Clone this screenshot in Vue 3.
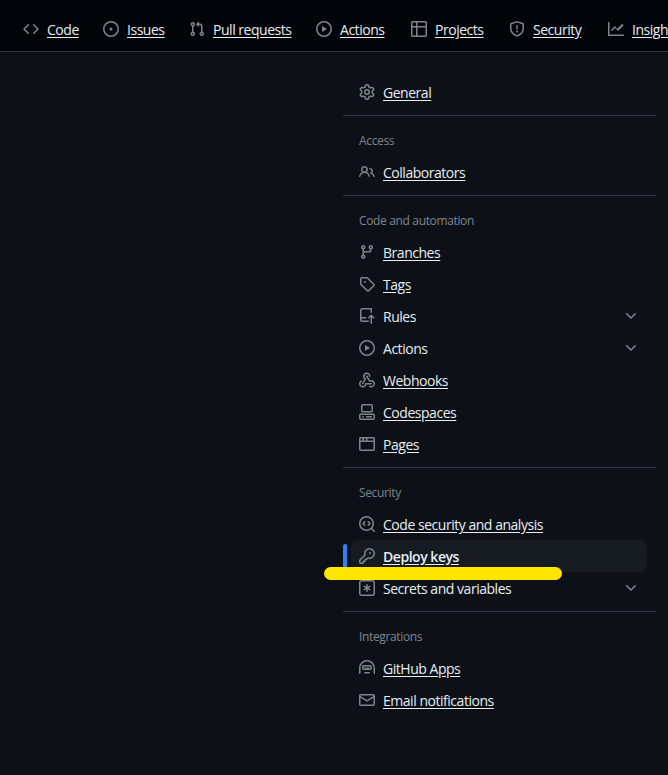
<script setup>
const icons = {
  code: ['m11.28 3.22 4.25 4.25a.75.75 0 0 1 0 1.06l-4.25 4.25a.749.749 0 0 1-1.275-.326.749.749 0 0 1 .215-.734L13.94 8l-3.72-3.72a.749.749 0 0 1 .326-1.275.749.749 0 0 1 .734.215Zm-6.56 0a.751.751 0 0 1 1.042.018.751.751 0 0 1 .018 1.042L2.06 8l3.72 3.72a.749.749 0 0 1-.326 1.275.749.749 0 0 1-.734-.215L.47 8.53a.75.75 0 0 1 0-1.06Z'],
  issue: ['M8 9.5a1.5 1.5 0 1 0 0-3 1.5 1.5 0 0 0 0 3Z', 'M8 0a8 8 0 1 1 0 16A8 8 0 0 1 8 0ZM1.5 8a6.5 6.5 0 1 0 13 0 6.5 6.5 0 0 0-13 0Z'],
  pull: ['M1.5 3.25a2.25 2.25 0 1 1 3 2.122v5.256a2.251 2.251 0 1 1-1.5 0V5.372A2.25 2.25 0 0 1 1.5 3.25Zm5.677-.177L9.573.677A.25.25 0 0 1 10 .854V2.5h1A2.5 2.5 0 0 1 13.5 5v5.628a2.251 2.251 0 1 1-1.5 0V5a1 1 0 0 0-1-1h-1v1.646a.25.25 0 0 1-.427.177L7.177 3.427a.25.25 0 0 1 0-.354ZM3.75 2.5a.75.75 0 1 0 0 1.5.75.75 0 0 0 0-1.5Zm0 9.5a.75.75 0 1 0 0 1.5.75.75 0 0 0 0-1.5Zm8.25.75a.75.75 0 1 0 1.5 0 .75.75 0 0 0-1.5 0Z'],
  play: ['M8 0a8 8 0 1 1 0 16A8 8 0 0 1 8 0ZM1.5 8a6.5 6.5 0 1 0 13 0 6.5 6.5 0 0 0-13 0Zm4.879-2.773 4.264 2.559a.25.25 0 0 1 0 .428l-4.264 2.559A.25.25 0 0 1 6 10.559V5.442a.25.25 0 0 1 .379-.215Z'],
  table: ['M0 1.75C0 .784.784 0 1.75 0h12.5C15.216 0 16 .784 16 1.75v12.5A1.75 1.75 0 0 1 14.25 16H1.75A1.75 1.75 0 0 1 0 14.25ZM6.5 6.5v8h7.75a.25.25 0 0 0 .25-.25V6.5Zm8-1.5V1.75a.25.25 0 0 0-.25-.25H6.5V5Zm-13 1.5v7.75c0 .138.112.25.25.25H5v-8ZM5 5V1.5H1.75a.25.25 0 0 0-.25.25V5Z'],
  shield: ['M7.467.133a1.748 1.748 0 0 1 1.066 0l5.25 1.68A1.75 1.75 0 0 1 15 3.48V7c0 1.566-.32 3.182-1.303 4.682-.983 1.498-2.585 2.813-5.032 3.855a1.697 1.697 0 0 1-1.33 0c-2.447-1.042-4.049-2.357-5.032-3.855C1.32 10.182 1 8.566 1 7V3.48a1.75 1.75 0 0 1 1.217-1.667Zm.61 1.429a.25.25 0 0 0-.153 0l-5.25 1.68a.25.25 0 0 0-.174.238V7c0 1.358.275 2.666 1.057 3.86.784 1.194 2.121 2.34 4.366 3.297a.196.196 0 0 0 .154 0c2.245-.956 3.582-2.104 4.366-3.298C13.225 9.666 13.5 8.36 13.5 7V3.48a.251.251 0 0 0-.174-.237l-5.25-1.68ZM8.75 4.75v3a.75.75 0 0 1-1.5 0v-3a.75.75 0 0 1 1.5 0ZM9 10.5a1 1 0 1 1-2 0 1 1 0 0 1 2 0Z'],
  graph: ['M1.5 1.75V13.5h13.75a.75.75 0 0 1 0 1.5H.75a.75.75 0 0 1-.75-.75V1.75a.75.75 0 0 1 1.5 0Zm14.28 2.53-5.25 5.25a.75.75 0 0 1-1.06 0L7 7.06 4.28 9.78a.751.751 0 0 1-1.042-.018.751.751 0 0 1-.018-1.042l3.25-3.25a.75.75 0 0 1 1.06 0L9 7.94l4.72-4.72a.751.751 0 0 1 1.042.018.751.751 0 0 1 .018 1.042Z'],
  gear: ['M8 0a8.2 8.2 0 0 1 .701.031C9.444.095 9.99.645 10.16 1.29l.288 1.107c.018.066.079.158.212.224.231.114.454.243.668.386.123.082.233.09.299.071l1.103-.303c.644-.176 1.392.021 1.82.63.27.385.506.792.704 1.218.315.675.111 1.422-.364 1.891l-.814.806c-.049.048-.098.147-.088.294.016.257.016.515 0 .772-.01.147.038.246.088.294l.814.806c.475.469.679 1.216.364 1.891a7.977 7.977 0 0 1-.704 1.217c-.428.61-1.176.807-1.82.63l-1.102-.302c-.067-.019-.177-.011-.3.071a5.909 5.909 0 0 1-.668.386c-.133.066-.194.158-.211.224l-.29 1.106c-.168.646-.715 1.196-1.458 1.26a8.006 8.006 0 0 1-1.402 0c-.743-.064-1.289-.614-1.458-1.26l-.289-1.106c-.018-.066-.079-.158-.212-.224a5.738 5.738 0 0 1-.668-.386c-.123-.082-.233-.09-.299-.071l-1.103.303c-.644.176-1.392-.021-1.82-.63a8.12 8.12 0 0 1-.704-1.218c-.315-.675-.111-1.422.363-1.891l.815-.806c.05-.048.098-.147.088-.294a6.214 6.214 0 0 1 0-.772c.01-.147-.038-.246-.088-.294l-.815-.806C.635 6.045.431 5.298.746 4.623a7.92 7.92 0 0 1 .704-1.217c.428-.61 1.176-.807 1.82-.63l1.102.302c.067.019.177.011.3-.071.214-.143.437-.272.668-.386.133-.066.194-.158.211-.224l.29-1.106C6.009.645 6.556.095 7.299.03 7.53.01 7.764 0 8 0Zm-.571 1.525c-.036.003-.108.036-.137.146l-.289 1.105c-.147.561-.549.967-.998 1.189-.173.086-.34.183-.5.29-.417.278-.97.423-1.529.27l-1.103-.303c-.109-.03-.175.016-.195.045-.22.312-.412.644-.573.99-.014.031-.021.11.059.19l.815.806c.411.406.562.957.53 1.456a4.709 4.709 0 0 0 0 .582c.032.499-.119 1.05-.53 1.456l-.815.806c-.081.08-.073.159-.059.19.162.346.353.677.573.989.02.03.085.076.195.046l1.102-.303c.56-.153 1.113-.008 1.53.27.161.107.328.204.501.29.447.222.85.629.997 1.189l.289 1.105c.029.109.101.143.137.146a6.6 6.6 0 0 0 1.142 0c.036-.003.108-.036.137-.146l.289-1.105c.147-.561.549-.967.998-1.189.173-.086.34-.183.5-.29.417-.278.97-.423 1.529-.27l1.103.303c.109.029.175-.016.195-.045.22-.313.411-.644.573-.99.014-.031.021-.11-.059-.19l-.815-.806c-.411-.406-.562-.957-.53-1.456a4.709 4.709 0 0 0 0-.582c-.032-.499.119-1.05.53-1.456l.815-.806c.081-.08.073-.159.059-.19a6.464 6.464 0 0 0-.573-.989c-.02-.03-.085-.076-.195-.046l-1.102.303c-.56.153-1.113.008-1.53-.27a4.44 4.44 0 0 0-.501-.29c-.447-.222-.85-.629-.997-1.189l-.289-1.105c-.029-.11-.101-.143-.137-.146a6.6 6.6 0 0 0-1.142 0ZM11 8a3 3 0 1 1-6 0 3 3 0 0 1 6 0ZM9.5 8a1.5 1.5 0 1 0-3.001.001A1.5 1.5 0 0 0 9.5 8Z'],
  people: ['M2 5.5a3.5 3.5 0 1 1 5.898 2.549 5.508 5.508 0 0 1 3.034 4.084.75.75 0 1 1-1.482.235 4 4 0 0 0-7.9 0 .75.75 0 0 1-1.482-.236A5.507 5.507 0 0 1 3.102 8.05 3.493 3.493 0 0 1 2 5.5ZM11 4a3.001 3.001 0 0 1 2.22 5.018 5.01 5.01 0 0 1 2.56 3.012.749.749 0 0 1-.885.954.752.752 0 0 1-.549-.514 3.507 3.507 0 0 0-2.522-2.372.75.75 0 0 1-.574-.73v-.352a.75.75 0 0 1 .416-.672A1.5 1.5 0 0 0 11 5.5.75.75 0 0 1 11 4Zm-5.5-.5a2 2 0 1 0-.001 3.999A2 2 0 0 0 5.5 3.5Z'],
  branch: ['M9.5 3.25a2.25 2.25 0 1 1 3 2.122V6A2.5 2.5 0 0 1 10 8.5H6a1 1 0 0 0-1 1v1.128a2.251 2.251 0 1 1-1.5 0V5.372a2.25 2.25 0 1 1 1.5 0v1.836A2.493 2.493 0 0 1 6 7h4a1 1 0 0 0 1-1v-.628A2.25 2.25 0 0 1 9.5 3.25Zm-6 0a.75.75 0 1 0 1.5 0 .75.75 0 0 0-1.5 0Zm8.25-.75a.75.75 0 1 0 0 1.5.75.75 0 0 0 0-1.5ZM4.25 12a.75.75 0 1 0 0 1.5.75.75 0 0 0 0-1.5Z'],
  tag: ['M1 7.775V2.75C1 1.784 1.784 1 2.75 1h5.025c.464 0 .91.184 1.238.513l6.25 6.25a1.75 1.75 0 0 1 0 2.474l-5.026 5.026a1.75 1.75 0 0 1-2.474 0l-6.25-6.25A1.75 1.75 0 0 1 1 7.775Zm1.5 0c0 .066.026.13.073.177l6.25 6.25a.25.25 0 0 0 .354 0l5.025-5.025a.25.25 0 0 0 0-.354l-6.25-6.25a.25.25 0 0 0-.177-.073H2.75a.25.25 0 0 0-.25.25ZM6 5a1 1 0 1 1 0 2 1 1 0 0 1 0-2Z'],
  rules: ['M1 2.5A2.5 2.5 0 0 1 3.5 0h8.75a.75.75 0 0 1 .75.75v3.5a.75.75 0 0 1-1.5 0V1.5h-8a1 1 0 0 0-1 1v6.708A2.493 2.493 0 0 1 3.5 9h3.25a.75.75 0 0 1 0 1.5H3.5a1 1 0 0 0 0 2h5.75a.75.75 0 0 1 0 1.5H3.5A2.5 2.5 0 0 1 1 11.5Zm13.23 7.79h-.001l-1.224-1.224v6.184a.75.75 0 0 1-1.5 0V9.066L10.28 10.29a.75.75 0 0 1-1.06-1.061l2.505-2.504a.75.75 0 0 1 1.06 0L15.29 9.23a.751.751 0 0 1-.018 1.042.751.751 0 0 1-1.042.018Z'],
  webhook: [
    'M5.5 4.25a2.25 2.25 0 0 1 4.5 0 .75.75 0 0 0 1.5 0 3.75 3.75 0 1 0-6.14 2.889l-2.272 4.258a.75.75 0 0 0 1.324.706L7 7.25a.75.75 0 0 0-.309-1.015A2.25 2.25 0 0 1 5.5 4.25Z',
    'M7.364 3.607a.75.75 0 0 1 1.03.257l2.608 4.349a3.75 3.75 0 1 1-.628 6.785.75.75 0 0 1 .752-1.299 2.25 2.25 0 1 0-.033-3.88.75.75 0 0 1-1.03-.256L7.107 4.636a.75.75 0 0 1 .257-1.03Z',
    'M2.9 8.776A.75.75 0 0 1 2.625 9.8 2.25 2.25 0 1 0 6 11.75a.75.75 0 0 1 .75-.751h5.5a.75.75 0 0 1 0 1.5H7.425a3.751 3.751 0 1 1-5.55-3.998.75.75 0 0 1 1.024.274Z',
  ],
  codespaces: [
    'M0 11.25c0-.966.784-1.75 1.75-1.75h12.5c.966 0 1.75.784 1.75 1.75v3A1.75 1.75 0 0 1 14.25 16H1.75A1.75 1.75 0 0 1 0 14.25Zm2-9.5C2 .784 2.784 0 3.75 0h8.5C13.216 0 14 .784 14 1.75v5a1.75 1.75 0 0 1-1.75 1.75h-8.5A1.75 1.75 0 0 1 2 6.75Zm1.75-.25a.25.25 0 0 0-.25.25v5c0 .138.112.25.25.25h8.5a.25.25 0 0 0 .25-.25v-5a.25.25 0 0 0-.25-.25Zm-2 9.5a.25.25 0 0 0-.25.25v3c0 .138.112.25.25.25h12.5a.25.25 0 0 0 .25-.25v-3a.25.25 0 0 0-.25-.25Z',
    'M7 12.75a.75.75 0 0 1 .75-.75h4.5a.75.75 0 0 1 0 1.5h-4.5a.75.75 0 0 1-.75-.75Zm-4 0a.75.75 0 0 1 .75-.75h.5a.75.75 0 0 1 0 1.5h-.5a.75.75 0 0 1-.75-.75Z',
  ],
  browser: ['M0 2.75C0 1.784.784 1 1.75 1h12.5c.966 0 1.75.784 1.75 1.75v10.5A1.75 1.75 0 0 1 14.25 15H1.75A1.75 1.75 0 0 1 0 13.25ZM14.5 6h-13v7.25c0 .138.112.25.25.25h12.5a.25.25 0 0 0 .25-.25Zm-6-3.5v2h6V2.75a.25.25 0 0 0-.25-.25ZM5 2.5v2h2v-2Zm-3.25 0a.25.25 0 0 0-.25.25V4.5H3.5v-2Z'],
  scan: [
    'M0 7.5a7.5 7.5 0 1 1 13.307 4.746l2.473 2.474a.749.749 0 0 1-.326 1.275.749.749 0 0 1-.734-.215l-2.474-2.473A7.5 7.5 0 0 1 0 7.5Zm7.5-6a6 6 0 1 0 0 12 6 6 0 0 0 0-12Z',
    'M6.28 5.22a.75.75 0 0 1 0 1.06L5.06 7.5l1.22 1.22a.75.75 0 1 1-1.06 1.06L3.47 8.03a.75.75 0 0 1 0-1.06l1.75-1.75a.75.75 0 0 1 1.06 0Zm2.44 0a.75.75 0 0 1 1.06 0l1.75 1.75a.75.75 0 0 1 0 1.06L9.78 9.78a.75.75 0 1 1-1.06-1.06L9.94 7.5 8.72 6.28a.75.75 0 0 1 0-1.06Z',
  ],
  key: ['M10.5 0a5.499 5.499 0 1 1-1.288 10.848l-.932.932a.749.749 0 0 1-.53.22H7v.75a.749.749 0 0 1-.22.53l-.5.5a.749.749 0 0 1-.53.22H5v.75a.749.749 0 0 1-.22.53l-.5.5a.749.749 0 0 1-.53.22h-2A1.75 1.75 0 0 1 0 14.25v-2c0-.199.079-.389.22-.53l4.932-4.932A5.5 5.5 0 0 1 10.5 0Zm-4 5.5c-.001.431.069.86.205 1.269a.75.75 0 0 1-.181.768L1.5 12.56v1.69c0 .138.112.25.25.25h1.69l.06-.06v-1.19a.75.75 0 0 1 .75-.75h1.19l.06-.06v-1.19a.75.75 0 0 1 .75-.75h1.19l1.023-1.025a.75.75 0 0 1 .768-.18A4 4 0 1 0 6.5 5.5ZM11 6a1 1 0 1 1 0-2 1 1 0 0 1 0 2Z'],
  asterisk: [
    'M0 2.75A2.75 2.75 0 0 1 2.75 0h10.5A2.75 2.75 0 0 1 16 2.75v10.5A2.75 2.75 0 0 1 13.25 16H2.75A2.75 2.75 0 0 1 0 13.25ZM2.75 1.5c-.69 0-1.25.56-1.25 1.25v10.5c0 .69.56 1.25 1.25 1.25h10.5c.69 0 1.25-.56 1.25-1.25V2.75c0-.69-.56-1.25-1.25-1.25Z',
    'M8 4a.75.75 0 0 1 .75.75V6.7l1.69-.975a.75.75 0 0 1 .75 1.3L9.5 8l1.69.976a.75.75 0 0 1-.75 1.298L8.75 9.3v1.951a.75.75 0 0 1-1.5 0V9.299l-1.69.976a.75.75 0 0 1-.75-1.3L6.5 8l-1.69-.975a.75.75 0 0 1 .75-1.3l1.69.976V4.75A.75.75 0 0 1 8 4Z',
  ],
  hubot: [
    'M0 8a8 8 0 0 1 16 0v5.25a.75.75 0 0 1-1.5 0V8a6.5 6.5 0 1 0-13 0v5.25a.75.75 0 0 1-1.5 0Z',
    'M3 6.75C3 5.784 3.784 5 4.75 5h6.5c.966 0 1.75.784 1.75 1.75v1.5A1.75 1.75 0 0 1 11.25 10h-6.5A1.75 1.75 0 0 1 3 8.25Zm1.75-.25a.25.25 0 0 0-.25.25v1.5c0 .138.112.25.25.25h6.5a.25.25 0 0 0 .25-.25v-1.5a.25.25 0 0 0-.25-.25Z',
    'M5.6 6.9 7 8l1-.8 1 .8 1.4-1.1.5.7L9 9.3l-1-.8-1 .8-1.9-1.7Z',
    'M5.75 12h4.5a.75.75 0 0 1 0 1.5h-4.5a.75.75 0 0 1 0-1.5Z',
  ],
  mail: ['M1.75 2h12.5c.966 0 1.75.784 1.75 1.75v8.5A1.75 1.75 0 0 1 14.25 14H1.75A1.75 1.75 0 0 1 0 12.25v-8.5C0 2.784.784 2 1.75 2ZM1.5 12.251c0 .138.112.25.25.25h12.5a.25.25 0 0 0 .25-.25V5.809L8.38 9.397a.75.75 0 0 1-.76 0L1.5 5.809v6.442Zm13-8.181v-.32a.25.25 0 0 0-.25-.25H1.75a.25.25 0 0 0-.25.25v.32L8 7.88Z'],
}

const chevron = 'M12.78 5.22a.749.749 0 0 1 0 1.06l-4.25 4.25a.749.749 0 0 1-1.06 0L3.22 6.28a.749.749 0 1 1 1.06-1.06L8 8.939l3.72-3.719a.749.749 0 0 1 1.06 0Z'

const tabs = [
  { label: 'Code', icon: 'code' },
  { label: 'Issues', icon: 'issue' },
  { label: 'Pull requests', icon: 'pull' },
  { label: 'Actions', icon: 'play' },
  { label: 'Projects', icon: 'table' },
  { label: 'Security', icon: 'shield' },
  { label: 'Insights', icon: 'graph' },
]

const groups = [
  { items: [{ label: 'General', icon: 'gear', link: true }] },
  { title: 'Access', items: [{ label: 'Collaborators', icon: 'people', link: true }] },
  {
    title: 'Code and automation',
    items: [
      { label: 'Branches', icon: 'branch', link: true },
      { label: 'Tags', icon: 'tag', link: true },
      { label: 'Rules', icon: 'rules', expand: true },
      { label: 'Actions', icon: 'play', expand: true },
      { label: 'Webhooks', icon: 'webhook', link: true },
      { label: 'Codespaces', icon: 'codespaces', link: true },
      { label: 'Pages', icon: 'browser', link: true },
    ],
  },
  {
    title: 'Security',
    items: [
      { label: 'Code security and analysis', icon: 'scan', link: true },
      { label: 'Deploy keys', icon: 'key', link: true, active: true },
      { label: 'Secrets and variables', icon: 'asterisk', expand: true },
    ],
  },
  {
    title: 'Integrations',
    items: [
      { label: 'GitHub Apps', icon: 'hubot', link: true },
      { label: 'Email notifications', icon: 'mail', link: true },
    ],
  },
]
</script>

<template>
  <div class="page">
    <nav class="tabs">
      <a v-for="tab in tabs" :key="tab.label" class="tab">
        <svg class="icon" viewBox="0 0 16 16" width="16" height="16">
          <path v-for="d in icons[tab.icon]" :key="d" :d="d" />
        </svg>
        <span class="link">{{ tab.label }}</span>
      </a>
    </nav>

    <main class="content">
      <aside class="sidebar">
        <section v-for="(group, i) in groups" :key="i" class="group">
          <h3 v-if="group.title" class="heading">{{ group.title }}</h3>
          <div
            v-for="item in group.items"
            :key="item.label"
            class="item"
            :class="{ active: item.active }"
          >
            <svg class="icon" viewBox="0 0 16 16" width="16" height="16">
              <path v-for="d in icons[item.icon]" :key="d" :d="d" />
            </svg>
            <span :class="{ link: item.link }">{{ item.label }}</span>
            <svg v-if="item.expand" class="icon chevron" viewBox="0 0 16 16" width="16" height="16">
              <path :d="chevron" />
            </svg>
            <span v-if="item.active" class="marker"></span>
            <span v-if="item.active" class="highlight"></span>
          </div>
        </section>
      </aside>
    </main>
  </div>
</template>

<style>
html,
body {
  margin: 0;
  background: #0d1117;
  overflow: hidden;
}
</style>

<style scoped>
.page {
  height: 775px;
  background: #0d1117;
  color: #e6edf3;
  font-family: "Open Sans", "Liberation Sans", sans-serif;
  font-size: 14px;
  letter-spacing: -0.47px;
  overflow: hidden;
}

.tabs {
  display: grid;
  grid-template-columns: 80px 86px 127px 95px 98px 99px max-content;
  align-items: center;
  height: 44px;
  padding: 7px 0 0 23px;
  background: #010409;
  border-bottom: 1px solid #30363d;
  white-space: nowrap;
}

.tab {
  display: flex;
  align-items: center;
  gap: 8px;
}

.icon {
  flex: none;
  fill: #7d8590;
}

.link {
  text-decoration: underline;
  text-underline-offset: 2px;
}

.content {
  display: flex;
  justify-content: flex-end;
  padding: 24px 12px 0 0;
}

.sidebar {
  width: 313px;
}

.group + .group {
  margin-top: 7px;
  border-top: 1px solid #30363d;
}

.heading {
  margin: 0;
  padding: 15px 16px 5px;
  font-size: 12px;
  font-weight: 400;
  letter-spacing: -0.35px;
  line-height: 20px;
  color: #7d8590;
}

.item {
  position: relative;
  display: flex;
  align-items: center;
  gap: 8px;
  height: 32px;
  margin: 0 9px 0 8px;
  padding: 0 8px;
  border-radius: 6px;
}

.item.active {
  background: #161b22;
  font-weight: 600;
}

.chevron {
  margin-left: auto;
}

.marker {
  position: absolute;
  left: -8px;
  top: 4px;
  width: 4px;
  height: 24px;
  border-radius: 6px;
  background: #2f81f7;
}

.highlight {
  position: absolute;
  left: -27px;
  top: 27px;
  width: 238px;
  height: 13px;
  border-radius: 7px;
  background: #ffe600;
}
</style>
